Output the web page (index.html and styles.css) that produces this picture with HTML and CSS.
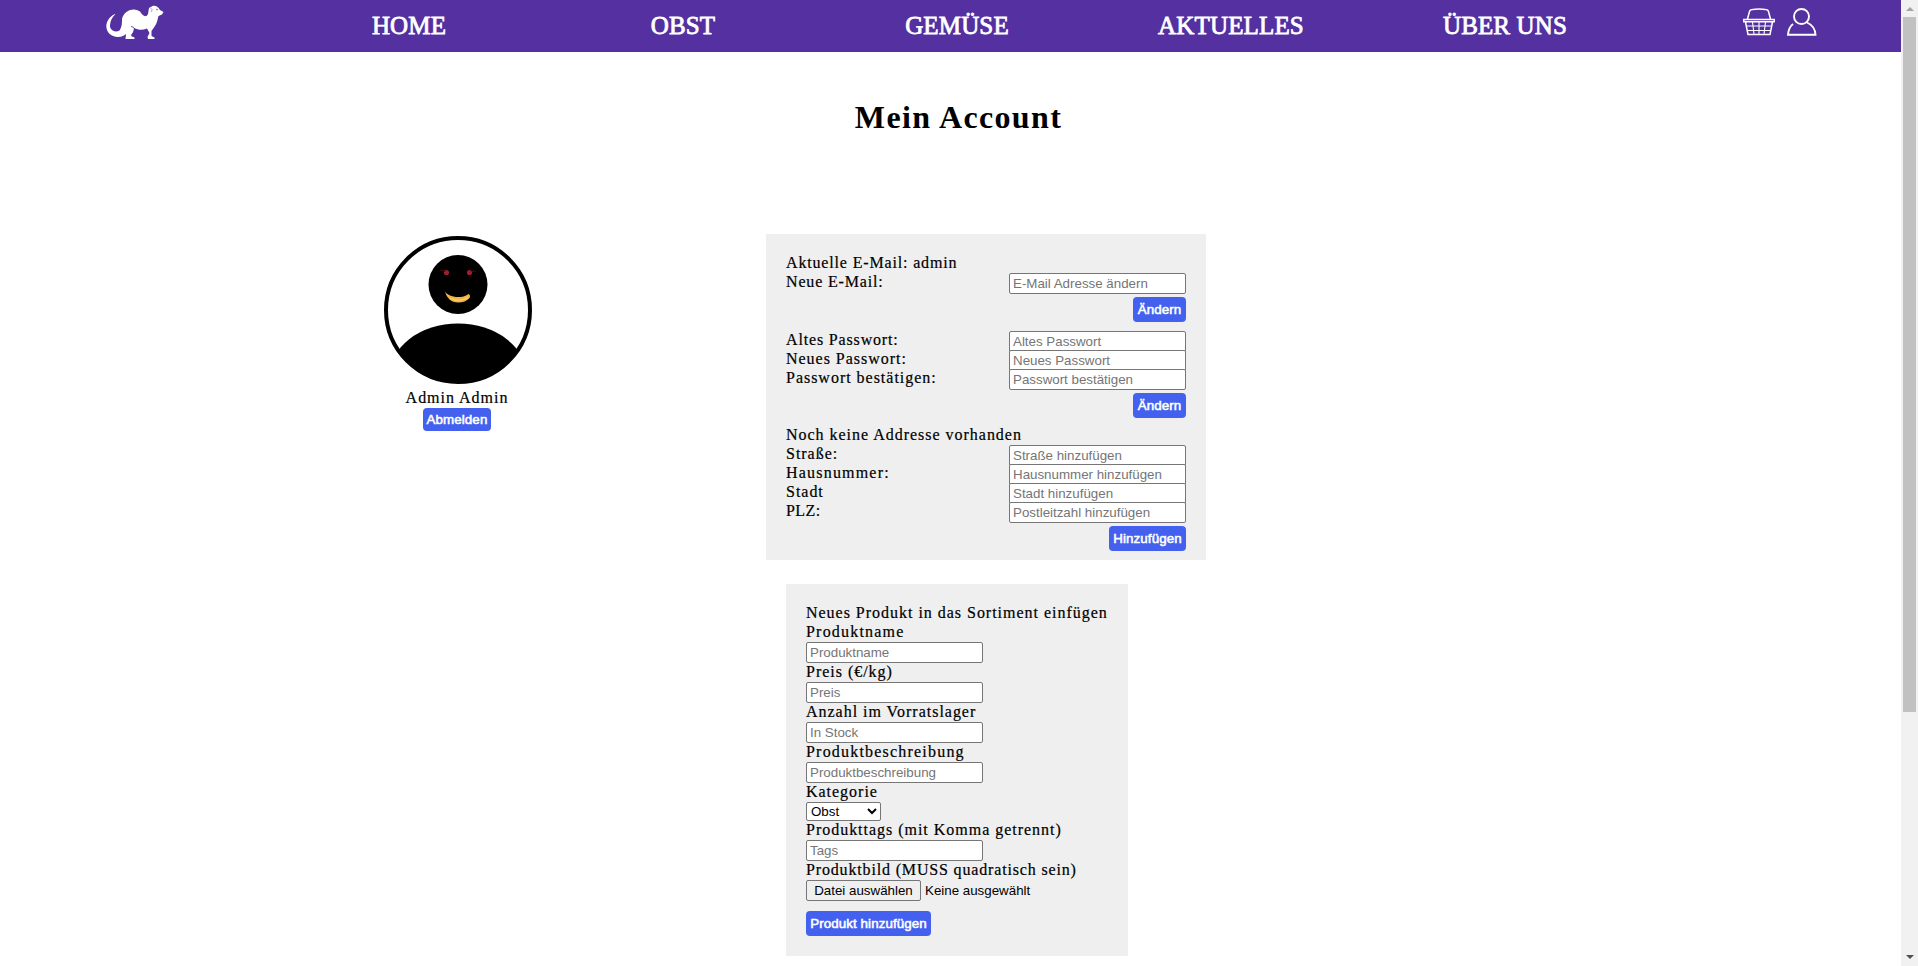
FILE: index.html
```html
<!DOCTYPE html>
<html lang="de">
<head>
<meta charset="utf-8">
<title>Mein Account</title>
<link rel="stylesheet" href="styles.css">
</head>
<body>
<div class="page">
  <header class="nav">
    <a class="logo"><svg width="60" height="42" viewBox="0 0 60 42"><path d="M15.500 14C11 15 7 20 6.300 25.500C6 32 11 37 18 37C22 37 24.500 35 26 34L25.500 39H34.500L34.500 37.500L31 36L33.500 31L34 28C39 30.500 43 30 47 28.500L49.500 33L47.500 37L48 39H54.500V37.500L51.500 36V31L55 26C57.500 22 57.500 19 58.500 16L62 14.500L63.500 12L60 10C58 6 55 5.500 52.500 6L49 8L48 14C46 18 43 16 40 11.500C34 7 24 10 22 19C22 23 22 27 19.500 30.500C15 33 9.500 30 10 25C10.500 20 12.500 17 15.500 14Z" fill="#fff" transform="translate(-4 0)"/><path d="M27 26.500Q32 27 30 32L27.500 35" fill="none" stroke="#5430a0" stroke-width=".8"/><circle cx="53" cy="9.500" r=".7" fill="#5430a0"/><path d="M46.500 8Q49 9 47.500 12" fill="none" stroke="#5430a0" stroke-width=".5"/></svg></a>
    <a>HOME</a>
    <a>OBST</a>
    <a>GEMÜSE</a>
    <a>AKTUELLES</a>
    <a>ÜBER UNS</a>
    <div class="icons">
      <svg width="32" height="28" viewBox="0 0 32 28" fill="none" stroke="#fff" stroke-width="1.500"><path d="M4.500 11L6.500 3.500Q7 1.500 9.500 1.500Q16 .5 22.500 1.500Q25 1.500 25.500 3.500L27.500 11M.8 11.500H31.200V13.800H.8ZM2.500 14L5 26.500H27L29.500 14"/><path d="M4 18H28M5 22.500H27M9.500 14L11 26M16 14V26M22.500 14L21 26" stroke-width="1.100"/></svg>
      <svg width="30" height="28" viewBox="0 0 30 28" fill="none" stroke="#fff" stroke-width="1.900"><circle cx="14.500" cy="8.500" r="7.500"/><path d="M6 16Q1.500 19.500 1 26.800H28.500Q28 18 20 14.500"/></svg>
    </div>
  </header>
  <h1>Mein Account</h1>
  <main>
    <section class="profile">
      <svg class="avatar" width="148" height="148" viewBox="0 0 148 148">
        <defs><clipPath id="round"><circle cx="74" cy="74" r="73"/></clipPath></defs>
        <ellipse cx="74" cy="141" rx="69" ry="53.500" clip-path="url(#round)"/>
        <circle cx="74" cy="74" r="72" fill="none" stroke="#000" stroke-width="4"/>
        <circle cx="74" cy="48.500" r="29.500"/>
        <circle cx="62.500" cy="36.500" r="2.600" fill="#a01c30"/><circle cx="85.500" cy="36.500" r="2.600" fill="#a01c30"/>
        <path d="M56 34L62 35.500M86 35.500L92 35" stroke="#6b1015" stroke-width=".7"/>
        <path d="M60.500 54.500C63 60.500 76 64 84.500 58Q87 59.500 85.500 62C81 67.500 70 68 65.500 63.500Q62 60 60.500 54.500Z" fill="#f4b544"/>
        <path d="M66.500 62.500Q75 66.500 84 61.500" fill="none" stroke="#ffd978"/>
      </svg>
      <div class="name">Admin Admin</div>
      <button class="btn logout">Abmelden</button>
    </section>
    <div class="forms">
      <form class="panel account">
        <div class="row snug">Aktuelle E-Mail: admin</div>
        <div class="row snug"><span>Neue E-Mail:</span><input placeholder="E-Mail Adresse ändern"></div>
        <button class="btn">Ändern</button>
        <div class="row snug"><span>Altes Passwort:</span><input placeholder="Altes Passwort"></div>
        <div class="row"><span>Neues Passwort:</span><input placeholder="Neues Passwort"></div>
        <div class="row"><span>Passwort bestätigen:</span><input placeholder="Passwort bestätigen"></div>
        <button class="btn second">Ändern</button>
        <div class="row">Noch keine Addresse vorhanden</div>
        <div class="row"><span>Straße:</span><input placeholder="Straße hinzufügen"></div>
        <div class="row loose"><span>Hausnummer:</span><input placeholder="Hausnummer hinzufügen"></div>
        <div class="row"><span>Stadt</span><input placeholder="Stadt hinzufügen"></div>
        <div class="row tight"><span>PLZ:</span><input placeholder="Postleitzahl hinzufügen"></div>
        <button class="btn wide">Hinzufügen</button>
      </form>
      <form class="panel product">
        <label>Neues Produkt in das Sortiment einfügen</label>
        <label class="loose">Produktname</label><input placeholder="Produktname">
        <label>Preis (€/kg)</label><input placeholder="Preis">
        <label>Anzahl im Vorratslager</label><input placeholder="In Stock">
        <label class="loose">Produktbeschreibung</label><input placeholder="Produktbeschreibung">
        <label>Kategorie</label><select><option>Obst</option></select>
        <label>Produkttags (mit Komma getrennt)</label><input placeholder="Tags">
        <label class="snug">Produktbild (MUSS quadratisch sein)</label>
        <div class="file"><button type="button">Datei auswählen</button><span>Keine ausgewählt</span></div>
        <button class="btn add">Produkt hinzufügen</button>
      </form>
    </div>
  </main>
</div>
<div class="scrollbar"><i class="up"></i><div class="thumb"></div><i class="down"></i></div>
</body>
</html>
```
FILE: styles.css
```css
* { box-sizing: border-box; }
body { margin: 0; height: 966px; overflow: hidden; display: flex; background: #fff; color: #000; font: 16px/17px "Liberation Serif", serif; letter-spacing: .98px; }
.page { width: 1901px; height: 966px; overflow: hidden; }
.nav { height: 52px; background: #5430a0; color: #fff; display: grid; grid-template-columns: 270px repeat(5, 274px) 1fr; padding-left: 2px; text-align: center; }
.nav > a { font-size: 25px; line-height: 51px; letter-spacing: .15px; -webkit-text-stroke: .8px #fff; }
.nav .logo { text-align: left; padding-left: 102px; line-height: 0; }
.icons { display: flex; gap: 12px; padding: 8px 0 0 101px; }
h1 { margin: 46px 0 0; padding-left: 16px; text-align: center; font-size: 32px; line-height: 38px; letter-spacing: 1.35px; }
main { display: flex; padding: 98px 0 0 308px; }
.profile { width: 300px; display: flex; flex-direction: column; align-items: center; padding-top: 2px; }
.avatar { display: block; }
.name { margin: 5px 2px 0 0; height: 18px; -webkit-text-stroke: .2px #000; }
.forms { margin-left: 158px; }
.panel { background: #efefef; padding: 20px; display: flex; flex-direction: column; }
.account { width: 440px; height: 326px; }
.row, label { flex: none; height: 19px; white-space: nowrap; -webkit-text-stroke: .2px #000; }
.row { display: flex; justify-content: space-between; }
.snug { letter-spacing: .84px; }
.tight { letter-spacing: .4px; }
.loose { letter-spacing: 1.2px; }
input { width: 177px; height: 21px; flex: none; margin: 0; padding: 1px 3px; border: 1px solid #767676; border-radius: 2px; background: #fff; font: 13.333px "Liberation Sans", sans-serif; -webkit-text-stroke: 0; }
input::placeholder { color: #757575; }
.btn { width: 53px; height: 25px; flex: none; padding: 0; border: 0; border-radius: 4px; background: #4361ee; color: #fff; font: 13.333px "Liberation Sans", sans-serif; letter-spacing: .1px; -webkit-text-stroke: .55px #fff; white-space: nowrap; }
.account .btn { align-self: flex-end; margin: 5px 0 9px; }
.account .second { margin-bottom: 8px; }
.account .wide { width: 77px; }
.logout { width: 68px; height: 23px; margin: 1px 2px 0 0; }
.product { width: 342px; height: 372px; margin: 24px 0 0 20px; align-items: flex-start; }
select { width: 75px; height: 19px; padding: 0; margin: 0; border: 1px solid #767676; border-radius: 2px; background: #fff; font: 13.333px "Liberation Sans", sans-serif; }
.file { height: 21px; display: flex; align-items: center; gap: 4px; font: 13.333px "Liberation Sans", sans-serif; letter-spacing: 0; }
.file button { width: 115px; height: 21px; padding: 0; border: 1px solid #767676; border-radius: 2px; background: #efefef; color: #000; font: inherit; }
.add { width: 125px; margin-top: 10px; }
.scrollbar { width: 17px; height: 966px; background: #f1f1f1; display: flex; flex-direction: column; align-items: center; }
.thumb { width: 13px; height: 695px; margin-top: 6px; background: #c1c1c1; }
.up, .down { border: 4px solid transparent; }
.up { margin-top: 3px; border-bottom-color: #a3a3a3; }
.down { margin: auto 0 3px; border-top-color: #505050; }
```
